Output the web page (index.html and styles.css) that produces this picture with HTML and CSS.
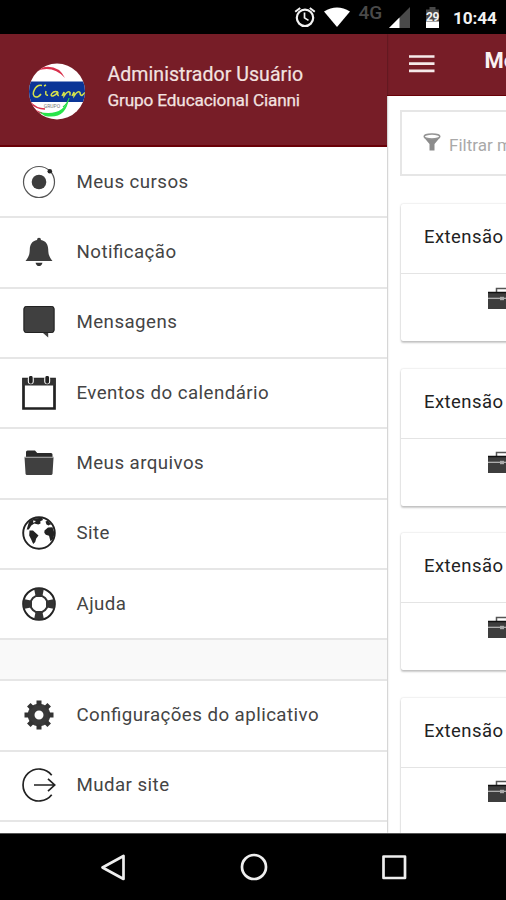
FILE: index.html
```html
<!DOCTYPE html>
<html lang="pt-BR">
<head>
<meta charset="utf-8">
<title>Cianni</title>
<link rel="stylesheet" href="styles.css">
</head>
<body>
<svg class="defs" width="0" height="0">
  <symbol id="case" viewBox="0 0 28 24">
    <path d="M8.500 5V1.500h11V5" fill="none" stroke="#555" stroke-width="1.500"/>
    <path d="M0 5h28v17H0z" fill="#3d3d3d"/>
    <path d="M0 5.500h28" stroke="#111" stroke-width="1.5"/>
    <path d="M0 11.3h28" stroke="#bbb" stroke-width="1.2"/>
    <path d="M12 9.8h4v3.400h-4z" fill="#aaa"/>
  </symbol>
</svg>
<div class="status">
  <svg width="22" height="24" viewBox="0 0 22 24" fill="none" stroke="#f2f2f2"><circle cx="11" cy="12.8" r="8.2" stroke-width="2.200"/><path d="M1.200 6.800 6.200 3M20.800 6.800 15.800 3" stroke-width="2"/><path d="M10.500 7.500v5.400l4 2.500" stroke-width="1.700"/></svg>
  <svg class="wifi" width="26" height="20" viewBox="0 0 26 20"><path d="M0 4.500Q13-3.500 26 4.500L13 20z" fill="#fff"/></svg>
  <span class="net">4G</span>
  <svg class="signal" width="21" height="21" viewBox="0 0 21 21"><path d="M21 0v21H0z" fill="#4a4a4a"/><path d="M10.500 10.500V21H0z" fill="#fff"/></svg>
  <span class="battery"><svg width="15" height="21" viewBox="0 0 15 21"><path d="M4.500 0h6v2.500H14V15H1V2.500h3.500z" fill="#484848"/><path d="M1 14.500h13V21H1z" fill="#fff"/></svg><b>29</b></span>
  <span class="clock">10:44</span>
</div>
<div class="app">
  <aside class="drawer">
    <header class="profile">
      <svg class="avatar" width="56" height="57" viewBox="0 0 56 57">
        <defs><clipPath id="disc"><circle cx="28" cy="28.500" r="28"/></clipPath></defs>
        <g clip-path="url(#disc)">
          <path d="M0 0h56v57H0z" fill="#fff"/>
          <path d="M8 6Q28-1 36 15Q24 2 8 8z" fill="#d9304c"/>
          <path d="M1 39q6 7 15 7M1 43q6 6 12 7" fill="none" stroke="#d9304c" stroke-width="1.300"/>
          <path d="M10 49Q34 54 40 35Q37 57 16 53z" fill="#28e54a"/>
          <path d="M0 18.500h56v20.500H0z" fill="#0b3597"/>
          <path d="M34 44q5-4 6-9" fill="none" stroke="#28d54a" stroke-width="1.200"/>
          <path d="M13 22.500C6 21 1 33 7 34q3 0 5-3M15 23l2-1M17 28q-1 5 2 4M29 29c-6-2-9 5-5 4q3-1 5-4-1 4 1 3.500M33 33l2-4q0 4 0 4 4-6 6-3.500v3M43 33l2-4v4q4-6 6-3.500 0 3 2 3l3-3" fill="none" stroke="#d5e34c" stroke-width="1.500"/>
        </g>
        <text x="23" y="44.500" class="avatar-text">GRUPO</text>
      </svg>
      <div>
        <div class="name">Administrador Usuário</div>
        <div class="group">Grupo Educacional Cianni</div>
      </div>
    </header>
    <nav>
      <a class="item"><svg viewBox="0 0 34 34"><circle cx="17" cy="17" r="15.500" fill="none" stroke="#555" stroke-width="1.200"/><circle cx="17" cy="17" r="7.300" fill="#3d3d3d"/><circle cx="27.800" cy="6.300" r="2.300" fill="#222"/></svg><span>Meus cursos</span></a>
      <a class="item"><svg viewBox="0 0 34 34"><path d="M17 2.800q2 0 2 2.100c5 1 7 4.500 7.200 9.300.2 6 1.300 8 4.300 11.800h-27C6.500 22.200 7.600 20.200 7.800 14.200 8 9.400 10 5.900 15 4.900q0-2.100 2-2.100z" fill="#3d3d3d"/><path d="M13.500 27.700h7q-1 3.400-3.500 3.400t-3.500-3.400z" fill="#333"/></svg><span>Notificação</span></a>
      <a class="item"><svg viewBox="0 0 34 34"><path d="M4.500 1h25q3 0 3 3V25q0 3-3 3h-3.300v4.500L21 28H4.500q-3 0-3-3V4q0-3 3-3z" fill="#404040"/><path d="M4.500 1.500h25q2.500 0 2.500 2.500V25q0 2.500-2.500 2.500h-25Q2 27.500 2 25V4Q2 1.500 4.500 1.500z" fill="none" stroke="#222"/></svg><span>Mensagens</span></a>
      <a class="item"><svg viewBox="0 0 34 34"><path d="M1.500 3h31v29.500h-31z" fill="#fff" stroke="#222" stroke-width="2.700"/><path d="M.5 2.500h33v7H.5z" fill="#333"/><path d="M8.800 3v2.200M25.200 3v2.200" stroke="#fff" stroke-width="6" stroke-linecap="round"/><path d="M8.800 1.800v4M25.200 1.800v4" stroke="#222" stroke-width="3.800" stroke-linecap="round"/></svg><span>Eventos do calendário</span></a>
      <a class="item"><svg viewBox="0 0 34 34"><path d="M4 11V6q0-1.500 1.500-1.500H13L15.200 7H29q1.500 0 1.500 1.500v2.500z" fill="#2a2a2a"/><path d="M2.500 11.500h29l-1 16q-.1 1.500-1.500 1.500H5q-1.400 0-1.500-1.500z" fill="#404040"/><path d="M2.500 11.300h29" stroke="#999" stroke-width="1.200"/></svg><span>Meus arquivos</span></a>
      <a class="item"><svg viewBox="0 0 34 34"><circle cx="17" cy="17" r="15.800" fill="#fff" stroke="#222" stroke-width="1.900"/><path d="M7 5.500 12 2.500l8-.7 1 2.200-2.700 1.200.2 2.200-2.200 1-4-1-3 2-2.500 4-2 0L4 16z" fill="#222"/><path d="m11 4.500 3 .5-2.500 2z" fill="#fff"/><path d="M7.500 14.500l3.500 0 5.500 5-2.300 3-1 3.500-2 2-2-4.500-2-4z" fill="#222"/><path d="m22.500 14.500 3.500-3 4.500-.3 2 6-1.500 6-2.500 2-1.500-5.500-3.200-1-1.500-2zM23.500 5.500l2.300-.7 4 4-1.800-.2-1.300 1-2.200-1.100z" fill="#222"/></svg><span>Site</span></a>
      <a class="item"><svg viewBox="0 0 34 34"><circle cx="17" cy="17" r="15.800" fill="none" stroke="#222" stroke-width="2"/><circle cx="17" cy="17" r="8.600" fill="none" stroke="#333" stroke-width="2"/><path d="M12 1.500h10l-1.800 8.500h-6.400zM12 32.500h10l-1.800-8.500h-6.400zM1.500 12v10l8.500-1.800v-6.400zM32.500 12v10l-8.500-1.800v-6.400z" fill="#333"/></svg><span>Ajuda</span></a>
      <div class="divider"></div>
      <a class="item"><svg viewBox="0 0 34 34"><circle cx="17" cy="17" r="7.900" fill="none" stroke="#3a3a3a" stroke-width="6.800"/><g stroke="#333" stroke-width="5"><path d="M17 2.500v5M17 26.500v5M2.500 17h5M26.500 17h5M6.800 6.800l3.500 3.500M23.700 23.700l3.500 3.500M27.200 6.800l-3.500 3.500M10.300 23.700l-3.500 3.500"/></g></svg><span>Configurações do aplicativo</span></a>
      <a class="item"><svg viewBox="0 0 34 34" fill="none" stroke="#222" stroke-width="1.700"><path d="M29.700 7.200A16 16 0 1 0 29.700 26.800"/><path d="M12 17h20.500M26 10.800l6.700 6.200-6.700 6.200"/></svg><span>Mudar site</span></a>
    </nav>
  </aside>
  <main class="page">
    <header class="bar"><svg width="26" height="20" viewBox="0 0 26 20"><path d="M0 3.500h25.500M0 10.700h25.500M0 17.900h25.500" stroke="#f6eaea" stroke-width="2.700"/></svg><span>Meus cursos</span></header>
    <div class="content">
      <div class="filter"><svg width="18" height="19" viewBox="0 0 18 19"><path d="M1 4.500 6.500 11v6.500h5V11L17 4.500z" fill="#8c8c8c"/><ellipse cx="9" cy="3.500" rx="7.800" ry="2.400" fill="#fff" stroke="#949494" stroke-width="1.500"/></svg><span>Filtrar meus cursos</span></div>
      <section class="card"><h2>Extensão</h2><div class="tools"><svg width="28" height="24"><use href="#case"/></svg></div></section>
      <section class="card"><h2>Extensão</h2><div class="tools"><svg width="28" height="24"><use href="#case"/></svg></div></section>
      <section class="card"><h2>Extensão</h2><div class="tools"><svg width="28" height="24"><use href="#case"/></svg></div></section>
      <section class="card"><h2>Extensão</h2><div class="tools"><svg width="28" height="24"><use href="#case"/></svg></div></section>
    </div>
  </main>
</div>
<footer class="navbar">
  <svg width="28" height="30" viewBox="0 0 28 30"><path d="M24.500 3v23L3.500 14.500z"/></svg>
  <svg width="28" height="30" viewBox="0 0 28 30"><circle cx="14" cy="14" r="12"/></svg>
  <svg width="28" height="30" viewBox="0 0 28 30"><path d="M3.500 3.500h21.500v21.500H3.500z"/></svg>
</footer>
</body>
</html>
```
FILE: styles.css
```css
* { box-sizing: border-box; }
body {
  margin: 0;
  width: 506px;
  height: 900px;
  overflow: hidden;
  background: #000;
  font-family: Roboto, "Liberation Sans", sans-serif;
  display: flex;
  flex-direction: column;
}
svg { display: block; flex: none; }
.defs { position: absolute; }
.status {
  height: 34px;
  flex: none;
  display: flex;
  align-items: flex-start;
  padding: 5px 0 0 294px;
  color: #f2f2f2;
}
.wifi { margin: 2px 0 0 8px; }
.net { margin: -3px 0 0 8.500px; width: 26.500px; font-size: 19px; line-height: 22px; font-weight: 500; color: #4a4a4a; }
.signal { margin: 2px 0 0 4px; }
.battery { position: relative; margin: 2px 0 0 15px; }
.battery b { position: absolute; left: 1px; top: 4px; font-size: 12px; line-height: 13px; letter-spacing: -0.5px; }
.clock { margin: 3px 0 0 13px; font-size: 17.2px; line-height: 20px; font-weight: 700; letter-spacing: -0.1px; }
.app { height: 799px; flex: none; display: flex; overflow: hidden; background: #fff; }
.drawer { width: 387px; flex: none; position: relative; box-shadow: 0 0 2px rgba(0, 0, 0, 0.5); }
.profile {
  height: 113px;
  background: #771d27;
  border-bottom: 2px solid #690007;
  display: flex;
  gap: 22.500px;
  padding: 29px 0 0 29px;
  color: #f3e3e0;
}
.avatar-text { font-size: 5px; fill: #777; text-anchor: middle; }
.name { font-size: 19.500px; line-height: 24px; white-space: nowrap; letter-spacing: 0.060px; -webkit-text-stroke: 0.2px; }
.group { font-size: 17.200px; line-height: 24px; margin-top: 1px; white-space: nowrap; letter-spacing: -0.150px; -webkit-text-stroke: 0.25px; }
nav { padding-top: 1px; }
.item {
  height: 70.330px;
  border-bottom: 2px solid #e6e6e6;
  display: flex;
  align-items: center;
  gap: 21px;
  padding: 0 0 1px 21.500px;
  font-size: 18.700px;
  letter-spacing: 0.450px;
  font-feature-settings: "liga" 1;
  color: #444;
}
.item svg { width: 34px; height: 34px; }
.divider { height: 41px; background: #f9f9f9; border-bottom: 2px solid #e6e6e6; }
.page { flex: 1; min-width: 0; overflow: hidden; }
.bar {
  height: 62px;
  background: #771d27;
  border-bottom: 1px solid #690007;
  display: flex;
  padding: 19px 0 0 22px;
  color: #fbf1f1;
  font-size: 22px;
  line-height: 24px;
  font-weight: 700;
  white-space: nowrap;
}
.bar span { margin: -4px 0 0 49.500px; }
.content { padding: 14px 0 0 13px; }
.filter {
  width: 300px;
  height: 66px;
  border: 2px solid #e6e6e6;
  display: flex;
  align-items: center;
  gap: 8px;
  padding-left: 21px;
  font-size: 17px;
  color: #a9a9a9;
}
.filter span { margin-top: 3px; }
.filter svg { margin-top: -1px; }
.card {
  width: 300px;
  height: 137px;
  margin: 28px 0 27.500px 1px;
  border-radius: 2px;
  background: #fff;
  box-shadow: 0 2px 2px rgba(0, 0, 0, 0.2), 0 0 2px rgba(0, 0, 0, 0.2);
}
.card + .card { margin-top: 0; }
h2 {
  height: 70px;
  margin: 0;
  padding-left: 23px;
  border-bottom: 1px solid #e4e4e4;
  font-size: 18.500px;
  line-height: 67px;
  font-weight: 400;
  letter-spacing: 0.450px;
  color: #222;
}
.tools { padding: 12.500px 0 0 87px; }
.navbar {
  flex: 1;
  display: flex;
  gap: 112.500px;
  padding: 19px 0 0 99px;
  border-top: 1px solid #555;
}
.navbar svg { fill: none; stroke: #eee; stroke-width: 2.700; stroke-linejoin: round; }
```
